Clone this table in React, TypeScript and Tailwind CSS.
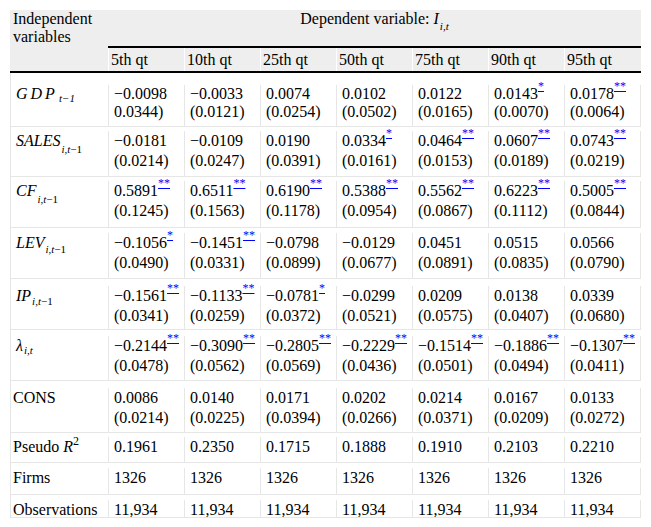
import React from "react";

const M = "\u2212";

type Val = { v: string; s?: string; se?: string };

function Stars({ s }: { s: string }) {
  return (
    <span className="text-[12px] leading-[0] align-[9px] text-[#0000ff] underline">
      {s}
    </span>
  );
}

function Sub({ children, cls }: { children: React.ReactNode; cls: string }) {
  return <span className={cls}>{children}</span>;
}

const it1 = (
  <>
    <i>i</i>,<i>t</i>
    {M}1
  </>
);

type Row = {
  label: React.ReactNode;
  vals: Val[];
  cls: string;
  lead: string;
};

function p(v: string, se?: string): Val {
  const m = v.match(/^(.*?)(\*+)?$/);
  return { v: m ? m[1] : v, s: m && m[2] ? m[2] : undefined, se };
}

const rows: Row[] = [
  {
    label: (
      <span className="ml-[3px] italic">
        <span className="tracking-[3px]">GD</span>P
        <Sub cls="ml-[4px] text-[11px] align-[-3px] leading-[0]">
          <i>t</i>
          {M}1
        </Sub>
      </span>
    ),
    vals: [
      p(`${M}0.0098`, "0.0344)"),
      p(`${M}0.0033`, "(0.0121)"),
      p("0.0074", "(0.0254)"),
      p("0.0102", "(0.0502)"),
      p("0.0122", "(0.0165)"),
      p("0.0143*", "(0.0070)"),
      p("0.0178**", "(0.0064)"),
    ],
    cls: "h-[54px] pt-[12px]",
    lead: "leading-[18px]",
  },
  {
    label: (
      <span className="ml-[3px]">
        <i>SALES</i>
        <Sub cls="ml-[1px] text-[11px] align-[-7px] leading-[0]">{it1}</Sub>
      </span>
    ),
    vals: [
      p(`${M}0.0181`, "(0.0214)"),
      p(`${M}0.0109`, "(0.0247)"),
      p("0.0190", "(0.0391)"),
      p("0.0334*", "(0.0161)"),
      p("0.0464**", "(0.0153)"),
      p("0.0607**", "(0.0189)"),
      p("0.0743**", "(0.0219)"),
    ],
    cls: "h-[50px] pt-[4px]",
    lead: "leading-[20px]",
  },
  {
    label: (
      <span className="ml-[3px]">
        <i>CF</i>
        <Sub cls="ml-[1px] text-[11px] align-[-7px] leading-[0]">{it1}</Sub>
      </span>
    ),
    vals: [
      p("0.5891**", "(0.1245)"),
      p("0.6511**", "(0.1563)"),
      p("0.6190**", "(0.1178)"),
      p("0.5388**", "(0.0954)"),
      p("0.5562**", "(0.0867)"),
      p("0.6223**", "(0.1112)"),
      p("0.5005**", "(0.0844)"),
    ],
    cls: "h-[51px] pt-[4px]",
    lead: "leading-[20px]",
  },
  {
    label: (
      <span className="ml-[3px]">
        <i>LEV</i>
        <Sub cls="ml-[1px] text-[11px] align-[-5px] leading-[0]">{it1}</Sub>
      </span>
    ),
    vals: [
      p(`${M}0.1056*`, "(0.0490)"),
      p(`${M}0.1451**`, "(0.0331)"),
      p(`${M}0.0798`, "(0.0899)"),
      p(`${M}0.0129`, "(0.0677)"),
      p("0.0451", "(0.0891)"),
      p("0.0515", "(0.0835)"),
      p("0.0566", "(0.0790)"),
    ],
    cls: "h-[51px] pt-[5px]",
    lead: "leading-[20px]",
  },
  {
    label: (
      <span className="ml-[3px]">
        <i>IP</i>
        <Sub cls="ml-[1px] text-[11px] align-[-4px] leading-[0]">{it1}</Sub>
      </span>
    ),
    vals: [
      p(`${M}0.1561**`, "(0.0341)"),
      p(`${M}0.1133**`, "(0.0259)"),
      p(`${M}0.0781*`, "(0.0372)"),
      p(`${M}0.0299`, "(0.0521)"),
      p("0.0209", "(0.0575)"),
      p("0.0138", "(0.0407)"),
      p("0.0339", "(0.0680)"),
    ],
    cls: "h-[51px] pt-[7px]",
    lead: "leading-[20px]",
  },
  {
    label: (
      <span className="ml-[3px]">
        <i>λ</i>
        <Sub cls="ml-[1px] text-[11px] align-[-3px] leading-[0]">
          <i>i</i>,<i>t</i>
        </Sub>
      </span>
    ),
    vals: [
      p(`${M}0.2144**`, "(0.0478)"),
      p(`${M}0.3090**`, "(0.0562)"),
      p(`${M}0.2805**`, "(0.0569)"),
      p(`${M}0.2229**`, "(0.0436)"),
      p(`${M}0.1514**`, "(0.0501)"),
      p(`${M}0.1886**`, "(0.0494)"),
      p(`${M}0.1307**`, "(0.0411)"),
    ],
    cls: "h-[51px] pt-[6px]",
    lead: "leading-[20px]",
  },
  {
    label: <span>CONS</span>,
    vals: [
      p("0.0086", "(0.0214)"),
      p("0.0140", "(0.0225)"),
      p("0.0171", "(0.0394)"),
      p("0.0202", "(0.0266)"),
      p("0.0214", "(0.0371)"),
      p("0.0167", "(0.0209)"),
      p("0.0133", "(0.0272)"),
    ],
    cls: "h-[52px] pt-[7px]",
    lead: "leading-[20px]",
  },
  {
    label: (
      <span>
        Pseudo <i>R</i>
        <span className="text-[12px] align-[7px] leading-[0]">2</span>
      </span>
    ),
    vals: ["0.1961", "0.2350", "0.1715", "0.1888", "0.1910", "0.2103", "0.2210"].map((x) => p(x)),
    cls: "h-[30px] pt-[4px]",
    lead: "leading-[20px]",
  },
  {
    label: <span>Firms</span>,
    vals: Array.from({ length: 7 }, () => p("1326")),
    cls: "h-[32px] pt-[5px]",
    lead: "leading-[20px]",
  },
  {
    label: <span>Observations</span>,
    vals: Array.from({ length: 7 }, () => p("11,934")),
    cls: "h-[23px] pt-[5px]",
    lead: "leading-[20px]",
  },
];

const qts = ["5th qt", "10th qt", "25th qt", "50th qt", "75th qt", "90th qt", "95th qt"];

export default function App() {
  return (
    <div className="bg-white min-h-[527px] pl-[10px] pt-[10px] font-['Liberation_Serif',serif] text-[16px] text-black">
      <div className="w-[631px]">
        <div className="grid grid-cols-[98px_repeat(6,76px)_77px] bg-[#eeeeee] border-b-2 border-black">
          <div className="row-span-2 pl-[3px] leading-[18px]">
            Independent
            <br />
            variables
          </div>
          <div className="col-span-7 h-[38px] border-b-2 border-black text-center leading-[18px]">
            Dependent variable: <i>I</i>
            <span className="ml-[1px] text-[11px] align-[-6px] leading-[0]">
              <i>i</i>,<i>t</i>
            </span>
          </div>
          {qts.map((q) => (
            <div key={q} className="h-[23px] border-l border-white pl-[2px] pt-[3px] leading-[18px] whitespace-nowrap">
              {q}
            </div>
          ))}
        </div>
        <div className="border-l border-[#e6e6e6]">
          {rows.map((r, i) => (
            <div
              key={i}
              className={`grid grid-cols-[98px_repeat(7,76px)] border-b border-[#e6e6e6] overflow-hidden ${r.cls}`}
            >
              <div className={`border-r border-[#e6e6e6] pl-[2px] whitespace-nowrap ${r.lead}`}>{r.label}</div>
              {r.vals.map((v, j) => (
                <div key={j} className={`border-r border-[#e6e6e6] pl-[5px] whitespace-nowrap ${r.lead}`}>
                  <div>
                    {v.v}
                    {v.s && <Stars s={v.s} />}
                  </div>
                  {v.se && <div>{v.se}</div>}
                </div>
              ))}
            </div>
          ))}
        </div>
      </div>
    </div>
  );
}
